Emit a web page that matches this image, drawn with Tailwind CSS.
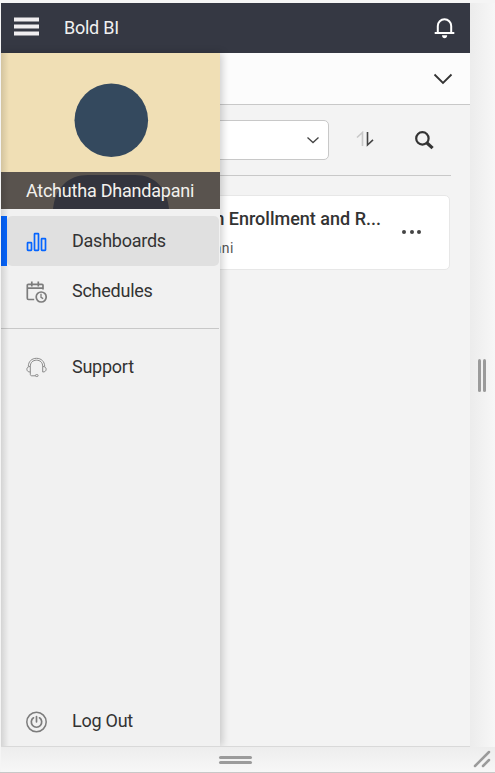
<!DOCTYPE html>
<html lang="en">
<head>
<meta charset="utf-8">
<title>Bold BI</title>
<script src="https://cdn.jsdelivr.net/npm/@tailwindcss/browser@4"></script>
</head>
<body class="w-[495px] h-[773px] overflow-hidden bg-[#f5f5f5] pt-[3px] pl-px font-[Roboto,sans-serif] text-[#333] border-b border-[#c8c8c8]">
<div class="flex h-[744px]">
  <div class="relative flex w-[469px] flex-col overflow-hidden bg-[#f3f3f3] border-b border-[#d9d9d9]">
    <header class="flex h-[50px] shrink-0 items-center bg-[#353843] pl-[13px] pr-[15px] text-white">
      <svg class="mb-[3px] h-[19px] w-[25px]" viewBox="0 0 25 19" fill="#f0eef0"><path d="M0 0.5h25v4H0zM0 7.500h25v4H0zM0 14.500h25v4H0z"/></svg>
      <h1 class="ml-[25px] text-[18px] leading-6 tracking-[-.25px] text-[#f0f0f0]">Bold BI</h1>
      <svg class="ml-auto h-[21px] w-[21px]" viewBox="0 0 21 21" fill="none" stroke="#fff" stroke-width="2"><path d="M.7 15h19.600M3.800 15V8a6.700 6.700 0 0 1 13.400 0v7"/><path d="M8 17.300h5.200c0 3.800-5.200 3.800-5.200 0z" fill="#fff" stroke="none"/></svg>
    </header>
    <div class="flex h-[52px] shrink-0 items-center justify-end border-b border-[#c8c8c8] bg-[#fcfcfc] pr-[17px]">
      <svg class="h-3 w-5" viewBox="0 0 20 12" fill="none" stroke="#333" stroke-width="1.800"><path d="M1.500 1.500l8.500 8.500 8.500-8.500"/></svg>
    </div>
    <main class="pl-4 pr-[19px] pt-[15px]">
      <div class="flex h-[56px] items-start border-b border-[#c8c8c8]">
        <div class="flex h-10 w-[312px] items-center justify-end rounded-[5px] border border-[#c8c8c8] bg-white pr-[9px]">
          <svg class="h-2 w-3" viewBox="0 0 12 8" fill="none" stroke="#444" stroke-width="1.300"><path d="M.5 1.500L6 6.500 11.500 1.500"/></svg>
        </div>
        <svg class="ml-[27px] mt-[11px] h-4 w-[18px]" viewBox="0 0 18 16" fill="none" stroke-width="1.600"><path d="M1 6.500L6.500 1.500V15" stroke="#c8c8c8"/><path d="M11.500 1v13L17 8.800" stroke="#444"/></svg>
        <svg class="ml-[41px] mt-[11px] h-[19px] w-[19px]" viewBox="0 0 19 19" fill="none" stroke="#333"><circle cx="7.400" cy="7.400" r="6.200" stroke-width="2.200"/><path d="M12 12l5.600 5.200" stroke-width="3.200"/></svg>
      </div>
      <section class="mt-[19px] flex h-[75px] w-[433px] justify-end rounded-[5px] border border-[#e7e7e7] bg-white">
        <div class="flex w-[251px] flex-col pt-[10px]">
          <h2 class="self-end whitespace-nowrap text-[18px] font-medium leading-[26px]">Student Exam Enrollment and R...</h2>
          <p class="mt-[6px] w-[104px] whitespace-nowrap text-right text-[14px] leading-5 tracking-[.5px] text-[#555]">Dhandapani</p>
        </div>
        <div class="ml-[21px] mr-[28px] flex w-[19px] items-center justify-between pb-px">
          <i class="size-1 rounded-full bg-[#444]"></i><i class="size-1 rounded-full bg-[#444]"></i><i class="size-1 rounded-full bg-[#444]"></i>
        </div>
      </section>
    </main>

    <aside class="absolute bottom-0 left-0 top-[50px] flex w-[219px] flex-col bg-[#f1f1f1] shadow-[2px_0_8px_rgba(0,0,0,.2)]">
      <div class="relative h-[156px] shrink-0 overflow-hidden bg-[#f0dfb5]">
        <svg class="block h-[156px] w-[219px]" viewBox="0 0 219 156" fill="#34495e"><circle cx="110.300" cy="67.300" r="36.800"/><path d="M52 156c2-21 15-34 35-34h47c20 0 32 13 34 34z"/></svg>
        <div class="absolute inset-x-0 bottom-0 flex h-[37px] items-center justify-center bg-[#332f35]/80 pr-px text-[18px] tracking-[-.22px] text-[#f3f1ed]">Atchutha Dhandapani</div>
      </div>
      <nav class="mt-[7px] flex flex-1 flex-col text-[18px] tracking-[-.25px]">
        <a class="flex h-[50px] bg-[#f1f1f1]">
          <span class="w-[6px] bg-[#0565ff]"></span>
          <span class="flex w-[212px] items-center rounded-[5px] bg-[#e0e0e0] pl-[19px]">
            <svg class="mt-[2px] h-5 w-[21px]" viewBox="0 0 21 20" fill="none" stroke="#0565ff" stroke-width="1.700"><rect x="1.500" y="10.700" width="4" height="7.600" rx=".5"/><rect x="8.500" y="1.700" width="4" height="16.600" rx=".5"/><rect x="15.500" y="6.700" width="4" height="11.600" rx=".5"/></svg>
            <span class="mb-[2px] ml-[25px]">Dashboards</span>
          </span>
        </a>
        <a class="flex h-[50px] items-center pl-[25px]">
          <svg class="mt-px h-[22px] w-[21px]" viewBox="0 0 21 22" fill="none" stroke="#7c7c7c" stroke-width="1.700"><path d="M8.200 18.500H2.500a1.200 1.200 0 0 1-1.200-1.200V4.300a1 1 0 0 1 1-1H16a1 1 0 0 1 1 1v4.200M1.300 7.200H17M5.800.5v5M12.300.5v5"/><circle cx="15.200" cy="16" r="5"/><path d="M15 12.800v3.500l2.200 1.300" stroke-width="1.300"/></svg>
          <span class="mb-[2px] ml-[25px]">Schedules</span>
        </a>
        <hr class="mt-[12px] w-[218px] border-[#c8c8c8]">
        <a class="mt-[13px] flex h-[50px] items-center pl-[25px]">
          <svg class="mt-px h-[21px] w-[21px]" viewBox="0 0 21 21" fill="none" stroke="#8a8a8a" stroke-width="1"><path d="M2.300 9.500C2.300 4.500 5.800 1.300 10.500 1.300s8.200 3.200 8.200 8.200M4.300 9.500c0-4 2.500-6.300 6.200-6.300s6.200 2.300 6.200 6.300M4.300 9.500v5.500C-.3 15.300-.3 9.200 4.300 9.500zM16.700 9.500v5.500c4.600.3 4.600-5.800 0-5.500zM4.300 15v2.300c0 1 .6 1.500 1.500 1.500h3.600"/><rect x="9.400" y="17.600" width="2.700" height="1.900" rx=".9"/></svg>
          <span class="mb-[2px] ml-[25px]">Support</span>
        </a>
        <a class="mb-[2px] mt-auto flex h-[48px] items-center pl-[24px]">
          <svg class="mt-[3px] h-[22px] w-[22px]" viewBox="0 0 22 22" fill="none" stroke="#7c7c7c" stroke-width="1.500" stroke-linecap="round"><circle cx="11.500" cy="11" r="9.700"/><path d="M8.500 6.800a5.200 5.200 0 1 0 6 0M11.500 5.500v5.300" stroke-width="1.700"/></svg>
          <span class="ml-[25px]">Log Out</span>
        </a>
      </nav>
      <div class="pointer-events-none absolute inset-y-0 left-0 w-2 bg-linear-to-r from-black/12 to-transparent"></div>
    </aside>
  </div>
  <div class="flex flex-1 items-center justify-center gap-[2px] bg-linear-to-r from-[#ececec] to-[#f7f7f7] pr-px pt-px">
    <i class="h-[33px] w-[3px] rounded-sm bg-[#9b9b9b]"></i><i class="h-[33px] w-[3px] rounded-sm bg-[#9b9b9b]"></i>
  </div>
</div>
<div class="flex h-[25px] bg-linear-to-b from-[#ededed] to-[#f7f7f7]">
  <div class="flex w-[469px] flex-col items-center justify-center gap-[2px] pt-px">
    <i class="h-[3px] w-[33px] rounded-sm bg-[#9b9b9b]"></i><i class="h-[3px] w-[33px] rounded-sm bg-[#9b9b9b]"></i>
  </div>
  <svg class="ml-[3px] mt-[3px] h-[18px] w-[19px]" viewBox="0 0 19 18" fill="none" stroke="#9b9b9b" stroke-width="2.500" stroke-linecap="round"><path d="M2 16L16 2M10 16l6-6"/></svg>
</div>
</body>
</html>
